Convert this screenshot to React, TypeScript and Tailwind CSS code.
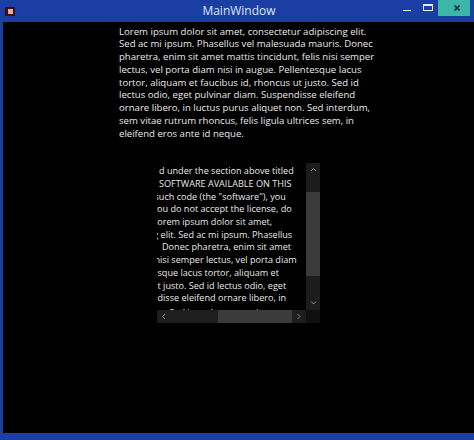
import React from "react";

const topLines = [
  "Lorem ipsum dolor sit amet, consectetur adipiscing elit.",
  "Sed ac mi ipsum. Phasellus vel malesuada mauris. Donec",
  "pharetra, enim sit amet mattis tincidunt, felis nisi semper",
  "lectus, vel porta diam nisi in augue. Pellentesque lacus",
  "tortor, aliquam et faucibus id, rhoncus ut justo. Sed id",
  "lectus odio, eget pulvinar diam. Suspendisse eleifend",
  "ornare libero, in luctus purus aliquet non. Sed interdum,",
  "sem vitae rutrum rhoncus, felis ligula ultrices sem, in",
  "eleifend eros ante id neque.",
];

const scrollLines: { t: string; c: string }[] = [
  { t: "d under the section above titled", c: "ml-[2px]" },
  { t: "SOFTWARE AVAILABLE ON THIS", c: "ml-[2px]" },
  { t: 'such code (the "software"), you', c: "-ml-[2.5px]" },
  { t: "you do not accept the license, do", c: "-ml-[4.5px]" },
  { t: "Lorem ipsum dolor sit amet,", c: "-ml-[4.5px]" },
  { t: "g elit. Sed ac mi ipsum. Phasellus", c: "-ml-[3.7px]" },
  { t: "Donec pharetra, enim sit amet", c: "ml-[5px]" },
  { t: "nisi semper lectus, vel porta diam", c: "-ml-[2.5px]" },
  { t: "sque lacus tortor, aliquam et", c: "ml-[0.5px]" },
  { t: "t justo. Sed id lectus odio, eget", c: "ml-[0.5px]" },
  { t: "disse eleifend ornare libero, in", c: "ml-[0.5px]" },
  { t: "n. Sed interdum, sem vitae rutr", c: "ml-[2px] mt-[2.5px]" },
];

function Chevron({ dir }: { dir: "up" | "down" | "left" | "right" }) {
  const d =
    dir === "up"
      ? "M1 4 L3.5 1.5 L6 4"
      : dir === "down"
      ? "M1 1.5 L3.5 4 L6 1.5"
      : dir === "left"
      ? "M4 1 L1.5 3.5 L4 6"
      : "M1.5 1 L4 3.5 L1.5 6";
  const w = dir === "up" || dir === "down" ? 7 : 5.5;
  const h = dir === "up" || dir === "down" ? 5.5 : 7;
  return (
    <svg width={w} height={h} viewBox={`0 0 ${w} ${h}`} fill="none">
      <path d={d} stroke="#8c8c8c" strokeWidth="1" />
    </svg>
  );
}

export default function App() {
  return (
    <div className="w-[474px] h-[440px] overflow-hidden bg-[#1b3ea4] flex flex-col font-['Open_Sans','Noto_Sans',sans-serif]">
      {/* Title bar */}
      <div className="h-[22px] shrink-0 grid grid-cols-[1fr_auto_1fr] items-start">
        <div className="flex pt-[7px] pl-[5px]">
          <div className="w-[10px] h-[9px] bg-[#3a0f14] p-[2px] pl-[3px]">
            <div className="w-full h-full bg-[#e9a9a4]" />
          </div>
        </div>
        <div className="ml-[4px] pt-[3px] text-[12px] leading-[16px] text-[#dce5f7]">
          MainWindow
        </div>
        <div className="flex justify-end">
          <div className="w-[22px] h-[16px] flex justify-center pt-[9.5px]">
            <div className="w-[8px] h-[1.5px] bg-[#e4eaf7]" />
          </div>
          <div className="w-[20px] h-[16px] flex justify-center pt-[4px]">
            <div className="w-[10px] h-[7px] border border-[#e4eaf7] border-t-2" />
          </div>
          <div className="w-[32px] h-[16px] bg-[#3cb6a7] flex items-center justify-center pl-[6px]">
            <svg width="6" height="6" viewBox="0 0 6 6">
              <path d="M0.5 0.5 L5.5 5.5 M5.5 0.5 L0.5 5.5" stroke="#123344" strokeWidth="1.6" />
            </svg>
          </div>
          <div className="w-[4px]" />
        </div>
      </div>

      {/* Client area */}
      <div className="flex-1 ml-[3px] mb-[7px] bg-black text-[#e9e9e9] leading-[12.75px] flex flex-col pt-[3.6px]">
        <div className="ml-[116px] w-[244px] text-[9.6px]">
          {topLines.map((l, i) => (
            <div key={i} className="whitespace-nowrap">
              {l}
            </div>
          ))}
        </div>

        {/* ScrollViewer */}
        <div className="ml-[154px] mt-[22.6px] w-[163px] h-[160px] grid grid-cols-[149px_14px] grid-rows-[147px_13px]">
          <div className="overflow-hidden pt-[2.3px] leading-[12.7px] text-[9.1px]">
            {scrollLines.map((l, i) => (
              <div key={i} className={`whitespace-nowrap ${l.c}`}>
                {l.t}
              </div>
            ))}
          </div>
          <div className="bg-[#1c1c1c] flex flex-col">
            <div className="h-[14px] flex items-center justify-center">
              <Chevron dir="up" />
            </div>
            <div className="h-[15px]" />
            <div className="h-[84px] bg-[#3b3b3b]" />
            <div className="flex-1" />
            <div className="h-[14px] flex items-center justify-center">
              <Chevron dir="down" />
            </div>
          </div>
          <div className="bg-[#1e1e1e] flex">
            <div className="w-[14px] flex items-center justify-center">
              <Chevron dir="left" />
            </div>
            <div className="w-[47px]" />
            <div className="w-[74px] bg-[#3b3b3b]" />
            <div className="w-[14px] flex items-center justify-center">
              <Chevron dir="right" />
            </div>
          </div>
          <div className="bg-[#101010]" />
        </div>
      </div>
    </div>
  );
}
